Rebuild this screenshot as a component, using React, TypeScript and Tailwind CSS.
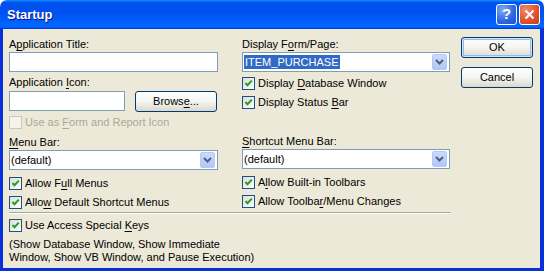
import React from "react";

const U = ({ children }: { children: React.ReactNode }) => (
  <span className="underline underline-offset-[2px] decoration-[1px]">{children}</span>
);

const Check = ({ checked = true, disabled = false }: { checked?: boolean; disabled?: boolean }) => (
  <span
    className={
      disabled
        ? "w-[13px] h-[13px] shrink-0 border border-[#cac8bb] bg-[#f4f3ee] flex items-center justify-center"
        : "w-[13px] h-[13px] shrink-0 border border-[#1c5180] bg-gradient-to-br from-[#dcdcd7] to-white flex items-center justify-center"
    }
  >
    {checked && (
      <svg width="9" height="9" viewBox="0 0 9 9">
        <path d="M1.5 4 L3.5 6.2 L7.8 1.6" fill="none" stroke="#21a121" strokeWidth="2" />
      </svg>
    )}
  </span>
);

const CheckRow = ({ children, disabled = false, className = "" }: any) => (
  <div className={`flex items-center gap-[3px] h-[13px] ${className}`}>
    <Check disabled={disabled} checked={!disabled} />
    <span className={disabled ? "text-[#aca899] leading-[13px]" : "leading-[13px]"}>{children}</span>
  </div>
);

const Arrow = () => (
  <div className="w-[15px] h-[16px] rounded-[2px] border border-[#b5c9f7] bg-gradient-to-b from-[#cbdafc] to-[#b2c6f6] flex items-center justify-center">
    <svg width="9" height="6" viewBox="0 0 9 6">
      <path d="M1 1 L4.5 4.5 L8 1" fill="none" stroke="#4d6185" strokeWidth="2" />
    </svg>
  </div>
);

const Combo = ({ children }: { children: React.ReactNode }) => (
  <div className="h-[20px] border border-[#7f9db9] bg-white flex items-center pl-[1px] pr-[2px] py-[1px]">
    <div className="flex-1 leading-[13px]">{children}</div>
    <Arrow />
  </div>
);

const Btn = ({ children, isDefault = false, className = "" }: any) => (
  <div
    className={`h-[21px] rounded-[3px] border border-[#003c74] bg-gradient-to-b from-white via-[#f4f4f0] to-[#dcd8cc] flex items-center justify-center leading-[13px] ${
      isDefault ? "shadow-[inset_0_0_0_1px_#cee7ff,inset_0_0_0_2px_#98b8ea]" : ""
    } ${className}`}
  >
    {children}
  </div>
);

const App = () => {
  return (
    <div className="w-[544px] h-[271px] bg-white flex flex-col text-[11px] text-black font-['Liberation_Sans',Arial,sans-serif]">
      {/* title bar */}
      <div className="h-[29px] shrink-0 rounded-t-[7px] bg-[linear-gradient(to_bottom,#0997ff_0%,#0053ee_8%,#0050ee_40%,#0066ff_88%,#0066ff_93%,#005bff_95%,#003dd7_96%,#003dd7_100%)] flex items-center pl-[7px] pr-[4px]">
        <span className="flex-1 text-white font-bold text-[13px] [text-shadow:1px_1px_#0f1089] pt-[1px]">Startup</span>
        <div className="w-[21px] h-[21px] rounded-[3px] border border-white bg-[radial-gradient(circle_at_30%_25%,#7fa9f8,#2b66e3_60%,#1d4fcc)] flex items-center justify-center text-white font-bold text-[15px]">
          ?
        </div>
        <div className="w-[21px] h-[21px] ml-[2px] rounded-[3px] border border-white bg-[radial-gradient(circle_at_30%_25%,#f08a6a,#e0502b_60%,#c63b17)] flex items-center justify-center">
          <svg width="11" height="11" viewBox="0 0 11 11">
            <path d="M1.5 1.5 L9.5 9.5 M9.5 1.5 L1.5 9.5" stroke="white" strokeWidth="2" />
          </svg>
        </div>
      </div>

      {/* body */}
      <div className="flex-1 bg-[#ece9d8] border-l-[3px] border-r-[4px] border-b-[3px] border-[#0831d9] pl-[6px] pt-[9px]">
        <div className="flex">
          {/* left column */}
          <div className="w-[209px] flex flex-col">
            <div className="h-[13px] leading-[13px]">
              A<U>p</U>plication Title:
            </div>
            <div className="h-[20px] mt-[1px] border border-[#7f9db9] bg-white" />
            <div className="h-[13px] leading-[13px] mt-[4px]">
              Application <U>I</U>con:
            </div>
            <div className="flex mt-[2px]">
              <div className="w-[116px] h-[20px] border border-[#7f9db9] bg-white" />
              <Btn className="ml-[10px] w-[82px] h-[20px]">
                Brows<U>e</U>...
              </Btn>
            </div>
            <CheckRow disabled className="mt-[4px]">
              Use as <U>F</U>orm and Report Icon
            </CheckRow>
            <div className="h-[13px] leading-[13px] mt-[7px]">
              <U>M</U>enu Bar:
            </div>
            <div className="mt-[1px]">
              <Combo>(default)</Combo>
            </div>
            <CheckRow className="mt-[7px]">
              Allow F<U>u</U>ll Menus
            </CheckRow>
            <CheckRow className="mt-[6px]">
              Allo<U>w</U> Default Shortcut Menus
            </CheckRow>
          </div>

          {/* right column */}
          <div className="w-[208px] ml-[24px] flex flex-col">
            <div className="h-[13px] leading-[13px]">
              Display F<U>o</U>rm/Page:
            </div>
            <div className="mt-[1px]">
              <Combo>
                <span className="bg-[#316ac5] text-white px-[1px] py-[1px]">ITEM_PURCHASE</span>
              </Combo>
            </div>
            <CheckRow className="mt-[5px]">
              Display <U>D</U>atabase Window
            </CheckRow>
            <CheckRow className="mt-[6px]">
              Display Status <U>B</U>ar
            </CheckRow>
            <div className="h-[13px] leading-[13px] mt-[26px]">
              <U>S</U>hortcut Menu Bar:
            </div>
            <div className="mt-[1px]">
              <Combo>(default)</Combo>
            </div>
            <CheckRow className="mt-[7px]">
              A<U>l</U>low Built-in Toolbars
            </CheckRow>
            <CheckRow className="mt-[6px]">
              Allow Toolba<U>r</U>/Menu Changes
            </CheckRow>
          </div>

          {/* buttons */}
          <div className="w-[72px] ml-[11px] flex flex-col -mt-[1px]">
            <Btn isDefault>OK</Btn>
            <Btn className="mt-[9px]">Cancel</Btn>
          </div>
        </div>

        <div className="w-[442px] mt-[3px] h-[2px] border-t border-[#aca899] border-b border-b-white" />
        <CheckRow className="mt-[5px]">
          Use Access Special <U>K</U>eys
        </CheckRow>
        <div className="mt-[6px] leading-[13px]">
          (Show Database Window, Show Immediate
          <br />
          Window, Show VB Window, and Pause Execution)
        </div>
      </div>
    </div>
  );
};

export default App;
